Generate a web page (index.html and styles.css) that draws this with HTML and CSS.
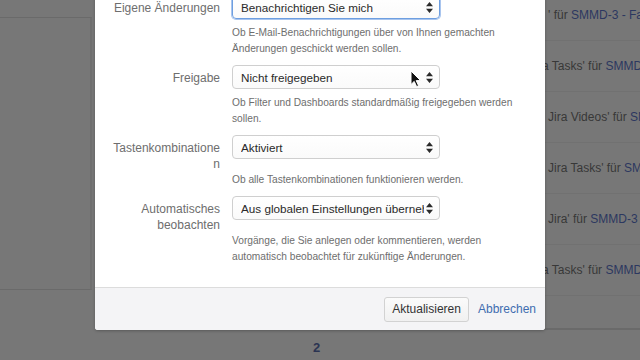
FILE: index.html
```html
<!DOCTYPE html>
<html lang="de">
<head>
    <meta charset="UTF-8">
    <meta name="viewport" content="width=device-width, initial-scale=1.0">
    <title>Profil aktualisieren</title>
    <link rel="stylesheet" href="styles.css">
</head>
<body>

    <div class="page">
        <div class="sidebar"></div>
        <div class="activity">
            <div class="activity-row">' für <span class="key">SMMD-3 - Facel</span></div>
            <div class="activity-row cut">a Tasks' für <span class="key">SMMD-1 -</span></div>
            <div class="activity-row">Jira Videos' für <span class="key">SMMD</span></div>
            <div class="activity-row">Jira Tasks' für <span class="key">SMMD</span></div>
            <div class="activity-row">Jira' für <span class="key">SMMD-3 - Fa</span></div>
            <div class="activity-row cut">a Tasks' für <span class="key">SMMD-1 -</span></div>
        </div>
        <div class="pager">2</div>
    </div>

    <div class="dialog">
        <form class="dialog-body">
            <div class="field">
                <label class="field-label">Eigene Änderungen</label>
                <div class="select focused">
                    <span>Benachrichtigen Sie mich</span>
                    <svg class="arrows" width="7" height="11" viewBox="0 0 7 11"><path d="M3.5 0L7 4.2H0z M3.5 11L0 6.8H7z" fill="#2b2b2b"/></svg>
                </div>
                <div class="desc">Ob E-Mail-Benachrichtigungen über von Ihnen gemachten Änderungen geschickt werden sollen.</div>
            </div>

            <div class="field">
                <label class="field-label">Freigabe</label>
                <div class="select">
                    <span>Nicht freigegeben</span>
                    <svg class="arrows" width="7" height="11" viewBox="0 0 7 11"><path d="M3.5 0L7 4.2H0z M3.5 11L0 6.8H7z" fill="#2b2b2b"/></svg>
                </div>
                <div class="desc">Ob Filter und Dashboards standardmäßig freigegeben werden sollen.</div>
            </div>

            <div class="field">
                <label class="field-label">Tastenkombinationen</label>
                <div class="select">
                    <span>Aktiviert</span>
                    <svg class="arrows" width="7" height="11" viewBox="0 0 7 11"><path d="M3.5 0L7 4.2H0z M3.5 11L0 6.8H7z" fill="#2b2b2b"/></svg>
                </div>
                <div class="desc">Ob alle Tastenkombinationen funktionieren werden.</div>
            </div>

            <div class="field">
                <label class="field-label">Automatisches beobachten</label>
                <div class="select">
                    <span>Aus globalen Einstellungen übernehmen</span>
                    <svg class="arrows" width="7" height="11" viewBox="0 0 7 11"><path d="M3.5 0L7 4.2H0z M3.5 11L0 6.8H7z" fill="#2b2b2b"/></svg>
                </div>
                <div class="desc">Vorgänge, die Sie anlegen oder kommentieren, werden automatisch beobachtet für zukünftige Änderungen.</div>
            </div>
        </form>
        <div class="dialog-footer">
            <button class="btn" type="button">Aktualisieren</button>
            <a class="cancel" href="#">Abbrechen</a>
        </div>
    </div>

    <svg class="cursor" width="12" height="18" viewBox="0 0 12 18"><path d="M1 1V14.5L4.2 11.4L6.6 16.6L8.6 15.7L6.2 10.6H10.6Z" fill="#111" stroke="#fff" stroke-width="1"/></svg>

</body>
</html>
```

FILE: styles.css
```css
body {
    font-family: 'Liberation Sans', Arial, sans-serif;
    margin: 0;
    width: 640px;
    height: 360px;
    overflow: hidden;
    background-color: #777777;
    position: relative;
}

/* page behind the overlay */
.page {
    height: 343px;
    padding-top: 17px;
    position: relative;
}
.sidebar {
    width: 90px;
    height: 271px;
    border-top: 1px solid #6a6a6a;
    border-bottom: 1px solid #6a6a6a;
    border-right: 2px solid #6f6f6f;
}
.activity {
    position: absolute;
    left: 340px;
    top: -10px;
    width: 300px;
    overflow: hidden;
    border-left: 1px solid #6c6c6c;
    border-bottom: 2px solid #6a6a6a;
    padding-bottom: 32px;
}
.activity-row {
    height: 50px;
    line-height: 50px;
    padding-left: 207px;
    border-bottom: 1px solid #717171;
    font-size: 12px;
    color: #383838;
    white-space: nowrap;
}
.activity-row.cut {
    padding-left: 201px;
}
.key {
    color: #2c3860;
}
.pager {
    position: absolute;
    left: 313px;
    top: 340px;
    font-size: 13px;
    font-weight: bold;
    color: #2b3452;
}

/* dialog */
.dialog {
    position: absolute;
    left: 95px;
    top: -25px;
    width: 450px;
    background-color: #fff;
    border-radius: 3px;
    box-shadow: 0 1px 3px rgba(0, 0, 0, 0.25);
}
.dialog-body {
    padding: 20px 0 22px 12px;
}
.field {
    display: grid;
    grid-template-columns: 113px 208px;
    column-gap: 12px;
    margin-bottom: 8px;
}
.field-label {
    grid-row: 1;
    padding-top: 5px;
    line-height: 16px;
    font-size: 12px;
    color: #6e6e6e;
    text-align: right;
    overflow-wrap: anywhere;
}
.select {
    grid-row: 1;
    grid-column: 2;
    height: 24px;
    margin-bottom: 6px;
    box-sizing: border-box;
    border: 1px solid #cfcfcf;
    border-radius: 4px;
    background: linear-gradient(#ffffff, #fafafa);
    display: flex;
    align-items: center;
    padding: 0 6px 0 8px;
    font-size: 11.7px;
    color: #2a2a2a;
}
.select span {
    flex: 1;
    overflow: hidden;
    white-space: nowrap;
}
.select.focused {
    border: 1px solid #6d9ee0;
    box-shadow: 0 0 0 1px #a9c5ee;
}
.arrows {
    flex: none;
    margin-left: 2px;
}
.desc {
    grid-row: 2;
    grid-column: 2;
    width: 290px;
    font-size: 10.2px;
    line-height: 16px;
    color: #6e6e6e;
}
.dialog-body .field:last-child {
    margin-bottom: 0;
}
.dialog-footer {
    border-top: 1px solid #dcdcdc;
    background-color: #f4f4f6;
    border-radius: 0 0 3px 3px;
    height: 42px;
    display: flex;
    align-items: center;
    justify-content: flex-end;
    padding-right: 9px;
    gap: 9px;
}
.btn {
    font-family: inherit;
    font-size: 12px;
    color: #333;
    height: 25px;
    padding: 0 7px;
    background: linear-gradient(#fbfbfb, #f0f0f0);
    border: 1px solid #d2d2d2;
    border-radius: 3px;
}
.cancel {
    font-size: 12px;
    color: #3f6db0;
    text-decoration: none;
}

.cursor {
    position: absolute;
    left: 410px;
    top: 70px;
}
```
